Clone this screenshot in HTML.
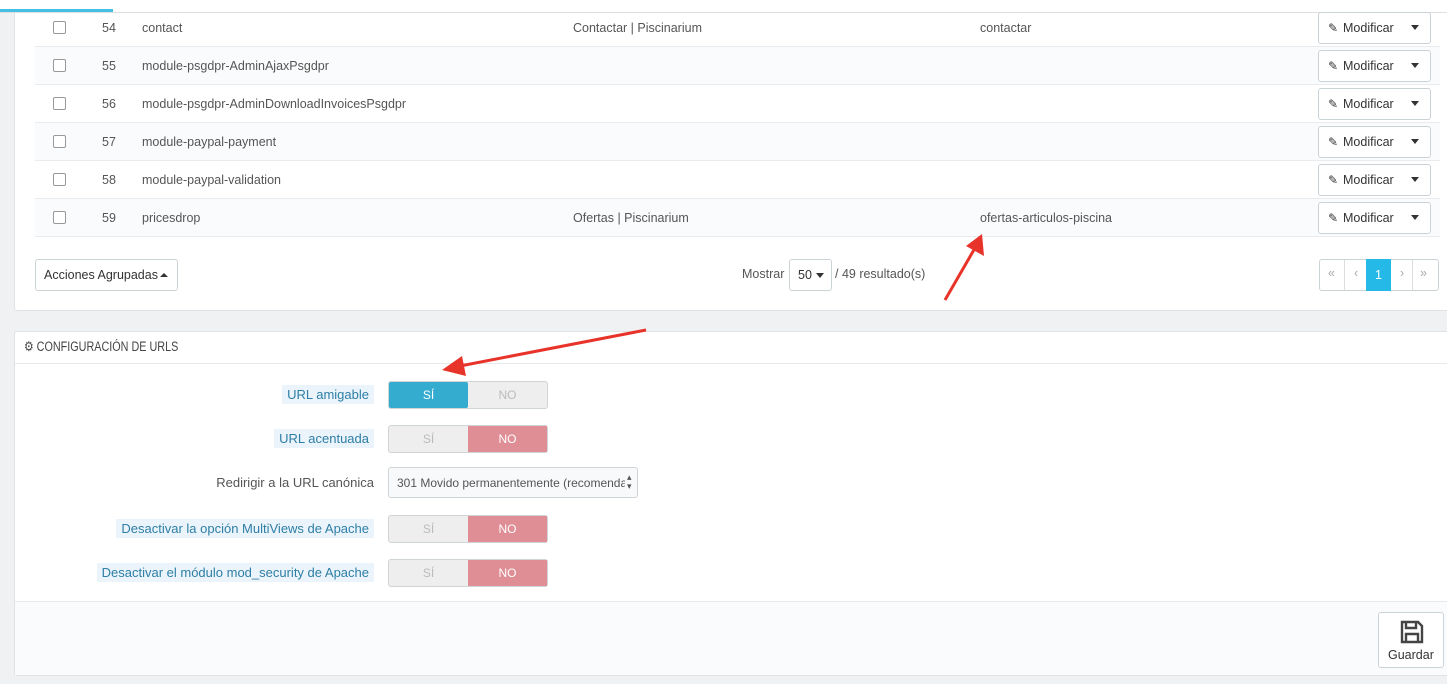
<!DOCTYPE html><html><head><style>
body{margin:0;width:1447px;height:684px;background:#eff1f2;font-family:"Liberation Sans",sans-serif;font-size:12.5px;color:#555;position:relative;overflow:hidden}
.a{position:absolute}
.p{background:#fff;border:1px solid #dfe3e6;border-radius:3px}
.row{position:absolute;left:35px;width:1405px;height:37px;border-bottom:1px solid #e8ecee}
.row.alt{background:#fafbfc}
.cb{position:absolute;left:18px;top:12px;width:11px;height:11px;border:1px solid #999;border-radius:2px;background:#fff}
.t{position:absolute;top:12px;color:#555}
.btn{position:absolute;border:1px solid #ccd3d7;border-radius:3px;background:#fff;color:#333}
.mod{left:1283px;top:3px;width:111px;height:30px}
.mod span{position:absolute;left:24px;top:8px}
.mod i{position:absolute;left:9px;top:8px;font-style:normal;font-size:12px}
.car{position:absolute;width:0;height:0;border-left:4px solid transparent;border-right:4px solid transparent;border-top:5px solid #333}
.lbl{position:absolute;right:1073px;padding:2px 5px;background:#eaf4fa;color:#2e7ea6;font-size:13px}
.sw{position:absolute;left:388px;width:158px;height:26px;border:1px solid #cfd4d7;border-radius:3px;background:#eee;font-size:12px}
.sw div{position:absolute;top:0;width:79px;height:26px;line-height:26px;text-align:center}
</style></head><body>
<div class="a p" style="left:14px;top:-5px;width:1450px;height:314px"></div>
<div class="a" style="left:0;top:0;width:1447px;height:12px;background:#fff;border-bottom:1px solid #dcdfe2"></div>
<div class="a" style="left:0;top:9px;width:113px;height:3px;background:#45c0e3"></div>
<div class="row" style="top:9px"><div class="cb"></div><div class="t" style="left:67px">54</div><div class="t" style="left:107px">contact</div><div class="t" style="left:538px">Contactar | Piscinarium</div><div class="t" style="left:945px">contactar</div><div class="btn mod"><i>✎</i><span>Modificar</span><b class="car" style="left:92px;top:12px"></b></div></div>
<div class="row alt" style="top:47px"><div class="cb"></div><div class="t" style="left:67px">55</div><div class="t" style="left:107px">module-psgdpr-AdminAjaxPsgdpr</div><div class="btn mod"><i>✎</i><span>Modificar</span><b class="car" style="left:92px;top:12px"></b></div></div>
<div class="row" style="top:85px"><div class="cb"></div><div class="t" style="left:67px">56</div><div class="t" style="left:107px">module-psgdpr-AdminDownloadInvoicesPsgdpr</div><div class="btn mod"><i>✎</i><span>Modificar</span><b class="car" style="left:92px;top:12px"></b></div></div>
<div class="row alt" style="top:123px"><div class="cb"></div><div class="t" style="left:67px">57</div><div class="t" style="left:107px">module-paypal-payment</div><div class="btn mod"><i>✎</i><span>Modificar</span><b class="car" style="left:92px;top:12px"></b></div></div>
<div class="row" style="top:161px"><div class="cb"></div><div class="t" style="left:67px">58</div><div class="t" style="left:107px">module-paypal-validation</div><div class="btn mod"><i>✎</i><span>Modificar</span><b class="car" style="left:92px;top:12px"></b></div></div>
<div class="row alt" style="top:199px"><div class="cb"></div><div class="t" style="left:67px">59</div><div class="t" style="left:107px">pricesdrop</div><div class="t" style="left:538px">Ofertas | Piscinarium</div><div class="t" style="left:945px">ofertas-articulos-piscina</div><div class="btn mod"><i>✎</i><span>Modificar</span><b class="car" style="left:92px;top:12px"></b></div></div>
<div class="btn" style="left:35px;top:259px;width:141px;height:30px"><span class="a" style="left:8px;top:8px">Acciones Agrupadas</span><b class="car" style="left:124px;top:13px;border-top:0;border-bottom:4px solid #333"></b></div>
<div class="a" style="left:742px;top:267px">Mostrar</div>
<div class="btn" style="left:789px;top:259px;width:41px;height:30px"><span class="a" style="left:8px;top:8px">50</span><b class="car" style="left:26px;top:13px"></b></div>
<div class="a" style="left:835px;top:267px">/ 49 resultado(s)</div>
<div class="btn" style="left:1319px;top:259px;width:118px;height:30px;color:#aaa">
<span class="a" style="left:8px;top:6px">«</span><span class="a" style="left:24px;top:0;height:30px;border-left:1px solid #ddd"></span><span class="a" style="left:34px;top:6px">‹</span>
<div class="a" style="left:46px;top:-1px;width:25px;height:32px;background:#25b9e8;color:#fff;text-align:center;line-height:32px">1</div>
<span class="a" style="left:80px;top:6px">›</span><span class="a" style="left:92px;top:0;height:30px;border-left:1px solid #ddd"></span><span class="a" style="left:100px;top:6px">»</span></div>
<div class="a p" style="left:14px;top:331px;width:1450px;height:343px"></div>
<div class="a" style="left:15px;top:363px;width:1432px;border-top:1px solid #e6e9eb"></div>
<div class="a" style="left:24px;top:339px;font-size:13.5px;color:#444;transform:scaleX(.8);transform-origin:left;white-space:nowrap">⚙ CONFIGURACIÓN DE URLS</div>
<div class="lbl" style="top:385px">URL amigable</div>
<div class="sw" style="top:381px"><div style="left:0;background:#34acd0;color:#fff;border-radius:2px">SÍ</div><div style="left:79px;color:#bbb">NO</div></div>
<div class="lbl" style="top:429px">URL acentuada</div>
<div class="sw" style="top:425px"><div style="left:0;color:#bbb">SÍ</div><div style="left:79px;background:#e08e96;color:#fff">NO</div></div>
<div class="a" style="right:1073px;top:475px;font-size:13px;color:#555">Redirigir a la URL canónica</div>
<div class="a" style="left:388px;top:467px;width:248px;height:29px;border:1px solid #cfd4d7;border-radius:3px;background:#f7f9fa"><span class="a" style="left:8px;top:8px;font-size:12px;white-space:nowrap;width:228px;overflow:hidden">301 Movido permanentemente (recomendado)</span><span class="a" style="left:238px;top:5px;font-size:9px;line-height:9px">▴<br>▾</span></div>
<div class="lbl" style="top:519px">Desactivar la opción MultiViews de Apache</div>
<div class="sw" style="top:515px"><div style="left:0;color:#bbb">SÍ</div><div style="left:79px;background:#e08e96;color:#fff">NO</div></div>
<div class="lbl" style="top:563px">Desactivar el módulo mod_security de Apache</div>
<div class="sw" style="top:559px"><div style="left:0;color:#bbb">SÍ</div><div style="left:79px;background:#e08e96;color:#fff">NO</div></div>
<div class="a" style="left:15px;top:601px;width:1432px;height:73px;background:#fafbfc;border-top:1px solid #e6e9eb"></div>
<div class="btn" style="left:1378px;top:612px;width:64px;height:54px"><svg class="a" style="left:21px;top:7px" width="24" height="24" viewBox="0 0 24 24"><path d="M2 2h16l4 4v16H2z M6 2v6h10V2 M6 22v-8h12v8" fill="none" stroke="#444" stroke-width="2.4"/></svg><span class="a" style="left:9px;top:35px">Guardar</span></div>
<svg class="a" style="left:0;top:0" width="1447" height="684"><g stroke="#e8332a" stroke-width="3" fill="#e8332a"><line x1="945" y1="300" x2="975" y2="248"/><polygon points="982,234 984,256 966,246" stroke="none"/><line x1="646" y1="330" x2="460" y2="366"/><polygon points="442,370 462,356 466,376" stroke="none"/></g></svg>
</body></html>
